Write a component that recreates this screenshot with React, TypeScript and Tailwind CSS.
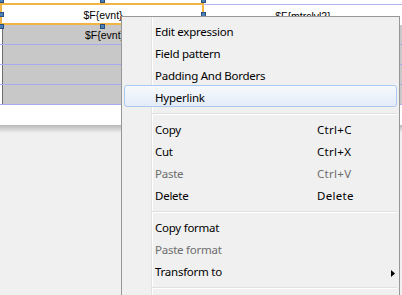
import React from "react";

type MenuItem = { label?: string; shortcut?: string; disabled?: boolean; active?: boolean; sub?: boolean; sep?: boolean };

const menu: MenuItem[] = [
  { label: "Edit expression" },
  { label: "Field pattern" },
  { label: "Padding And Borders" },
  { label: "Hyperlink", active: true },
  { sep: true },
  { label: "Copy", shortcut: "Ctrl+C" },
  { label: "Cut", shortcut: "Ctrl+X" },
  { label: "Paste", shortcut: "Ctrl+V", disabled: true },
  { label: "Delete", shortcut: "Delete" },
  { sep: true },
  { label: "Copy format" },
  { label: "Paste format", disabled: true },
  { label: "Transform to", sub: true },
  { sep: true },
];

function Handle({ className }: { className: string }) {
  return <div className={"absolute w-[5px] h-[5px] bg-[#4a7fb8] border border-[#2b4f7a] " + className} />;
}

function GrayRow({ text }: { text?: string }) {
  return (
    <div className="flex h-[20px] border-b border-[#aaaaf0]">
      <div className="w-[204px] ml-[2px] border-l border-[#6e6e6e] bg-[#c8c8c8] flex items-center justify-center pt-[2px] text-[10.5px] text-black">
        {text}
      </div>
      <div className="flex-1 bg-[#c8c8c8]" />
    </div>
  );
}

function Canvas() {
  return (
    <div className="relative h-[125px] bg-white font-['Liberation_Sans',sans-serif]">
      <div className="h-[3px]" />
      {/* selected row */}
      <div className="flex h-[22px]">
        <div className="w-[204px] border-2 border-[#f2b444] bg-white flex items-center justify-center text-[10.5px] text-black pl-[2px] pt-[3px]">
          $F{"{"}evnt{"}"}
        </div>
        <div className="flex-1 border-t border-[#b4b4f0] mt-[1px] bg-white flex items-center justify-center text-[10.5px] text-black pt-[3px]">
          $F{"{"}mtrclvl2{"}"}
        </div>
      </div>
      <GrayRow text="$F{evnt}" />
      <GrayRow />
      <GrayRow />
      <GrayRow />

      <Handle className="left-[-1px] top-[-2px]" />
      <Handle className="left-[-1px] top-[12px]" />
      <Handle className="left-[-1px] top-[24px]" />
      <Handle className="left-[100px] top-[-2px]" />
      <Handle className="left-[100px] top-[24px]" />
      <Handle className="left-[201px] top-[-2px]" />
      <Handle className="left-[201px] top-[12px]" />
    </div>
  );
}

function ContextMenu() {
  return (
    <div className="absolute left-[121px] top-[16px] w-[279px] h-[290px] bg-[#f0f0f0] border border-[#979797] pt-[2px] font-['Noto_Sans',sans-serif] text-[11.5px] tracking-[-0.25px]">
      <div className="absolute left-[29px] top-0 bottom-0 w-[1px] bg-[#e2e3e3]" />
      <div className="absolute left-[30px] top-0 bottom-0 w-[1px] bg-white" />
      {menu.map((m, i) =>
        m.sep ? (
          <div key={i} className="relative h-[10px] ml-[30px] mr-[2px] pt-[6px]">
            <div className="h-[1px] bg-[#e0e0e0]" />
            <div className="h-[1px] bg-white" />
          </div>
        ) : (
          <div
            key={i}
            className={
              "relative mx-[2px] h-[22px] flex items-center pl-[30px] pt-[4px] border rounded-[3px] " +
              (m.active ? "border-[#a9c9ef] bg-gradient-to-b from-[#f6f9fd] to-[#e4ecf8]" : "border-transparent") +
              (m.disabled ? " text-[#6d6d6d]" : " text-black")
            }
          >
            <span className="w-[162px] whitespace-nowrap">{m.label}</span>
            <span className="whitespace-nowrap tracking-[0.3px]">{m.shortcut}</span>
            {m.sub && (
              <svg className="absolute right-[1px] top-[10px]" width="4" height="7" viewBox="0 0 4 7">
                <path d="M0 0 L4 3.5 L0 7 Z" fill="#000" />
              </svg>
            )}
          </div>
        )
      )}
    </div>
  );
}

export default function App() {
  return (
    <div className="relative w-[402px] h-[295px] overflow-hidden bg-[#f0f0f0]">
      <Canvas />
      <div className="h-[8px] bg-gradient-to-b from-[#b8b8b8] to-[#f0f0f0]" />
      <ContextMenu />
    </div>
  );
}
